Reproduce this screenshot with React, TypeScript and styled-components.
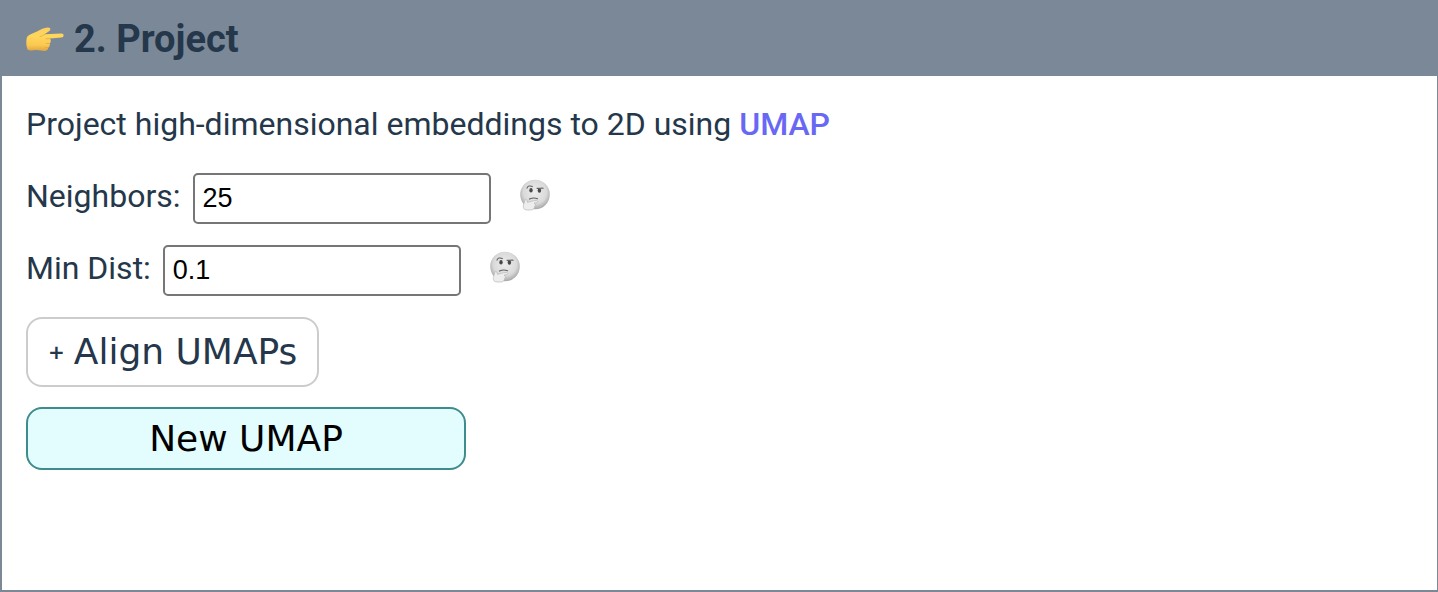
import React, { useState } from "react";
import styled, { createGlobalStyle } from "styled-components";

const GlobalStyle = createGlobalStyle`
  *, *::before, *::after { box-sizing: border-box; }
  body {
    margin: 0;
    background: #fff;
    color: #25374a;
    font-family: Roboto, "Liberation Sans", sans-serif;
    font-size: 32px;
    line-height: 48px;
  }
`;

const Panel = styled.section`
  display: flex;
  flex-direction: column;
  min-height: 100vh;
  border: 2px solid #7b8898;
  border-width: 0 1px 2px 2px;
`;

const PanelHeader = styled.header`
  display: flex;
  align-items: center;
  gap: 9px;
  padding: 15px 24px 13px;
  background: #7b8898;
`;

const Title = styled.h3`
  margin: 0;
  font-size: 38px;
  line-height: 48px;
  font-weight: 700;
`;

const PanelBody = styled.form`
  display: flex;
  flex-direction: column;
  align-items: flex-start;
  padding: 24px;
`;

const Intro = styled.p`
  margin: 0 0 25px;
`;

const DocLink = styled.a`
  color: #6868f4;
  font-weight: 500;
  text-decoration: none;
`;

const Field = styled.div`
  display: flex;
  align-items: center;
  margin-bottom: 21px;
`;

const Label = styled.label`
  margin-right: 12px;
  padding-bottom: 4px;
  line-height: 47px;
`;

const TextInput = styled.input`
  width: 298px;
  height: 51px;
  padding: 0 8px;
  border: 2px solid #767676;
  border-radius: 5px;
  background: #fff;
  color: #000;
  font-family: "Liberation Sans", Arial, sans-serif;
  font-size: 27px;
`;

const HelpButton = styled.button`
  display: flex;
  margin: 0 0 8px 28px;
  padding: 0;
  border: 0;
  background: none;
  cursor: help;
`;

const Button = styled.button<{ $primary?: boolean }>`
  display: flex;
  align-items: center;
  justify-content: center;
  gap: 9px;
  width: ${(p) => (p.$primary ? "440px" : "auto")};
  max-width: 100%;
  height: ${(p) => (p.$primary ? "63px" : "70px")};
  margin-bottom: 20px;
  padding: 0 20px;
  border: 2px solid ${(p) => (p.$primary ? "#3f8c8c" : "#ccc")};
  border-radius: 16px;
  background: ${(p) => (p.$primary ? "#e3fdff" : "#fff")};
  color: ${(p) => (p.$primary ? "#000" : "#25374a")};
  font-family: "DejaVu Sans", sans-serif;
  font-size: 36px;
  line-height: 40px;
  white-space: nowrap;
  cursor: pointer;
`;

const Plus = styled.span`
  font-size: 20px;
  font-weight: 700;
`;

const PointingHand = () => (
  <svg width="39" height="48" viewBox="0 0 39 48" aria-hidden="true">
    <defs>
      <linearGradient id="hand" gradientUnits="userSpaceOnUse" x1="0" y1="13" x2="0" y2="36">
        <stop offset="0" stopColor="#f9d060" />
        <stop offset=".35" stopColor="#ffd75c" />
        <stop offset=".75" stopColor="#fac850" />
        <stop offset="1" stopColor="#e0a440" />
      </linearGradient>
    </defs>
    <path
      d="M1 22C3 19.500 7 18.500 11 16.500C15 14.300 18 13 21.500 12.500C24.500 12.200 25.200 14.300 23.400 15.900L18.500 19.200L35.500 18.600C38.300 18.600 38.300 22.300 35.500 22.500L24 23.600C25.200 25.400 25 27.200 23.800 28.600C24 30.500 23.400 32.100 22.200 32.700C21.800 35 20.500 35.900 18.500 36L11 35.100C8 34.900 5 36 2 35C-.2 32 .1 25 1 22Z"
      fill="url(#hand)"
    />
    <path
      d="M14 21.500C16 21.200 17.500 20.200 19 19.200M24 23.600L20 23.800M23.800 28.600L20.500 28.400M22.200 32.700L19.500 32.300"
      fill="none"
      stroke="#e0a53c"
      strokeWidth=".7"
      strokeLinecap="round"
    />
  </svg>
);

const ThinkingFace = ({ id }: { id: string }) => (
  <svg width="32" height="32" viewBox="0 0 32 32" aria-hidden="true">
    <defs>
      <radialGradient id={id} cx=".5" cy=".42" r=".6">
        <stop offset="0" stopColor="#ececec" />
        <stop offset=".65" stopColor="#dadada" />
        <stop offset="1" stopColor="#a0a0a0" />
      </radialGradient>
    </defs>
    <circle cx="16" cy="15.500" r="14.800" fill={`url(#${id})`} />
    <ellipse cx="12" cy="11.200" rx="1.700" ry="2.200" fill="#484848" />
    <ellipse cx="20.400" cy="11.500" rx="1.700" ry="2.200" fill="#484848" />
    <path
      d="M8 9.200C8.500 7 11 6.300 13.300 7.600M18 9.200C20 9.800 22 8.700 24.200 9.200M10.500 20.100C13.500 18.600 16.500 18.900 18.500 19.800"
      fill="none"
      stroke="#606060"
      strokeWidth="1.100"
      strokeLinecap="round"
    />
    <path
      d="M5.800 21.300C7 19.800 8.400 21 8.300 23.300C11 23 13 21.700 17 21.500C19.200 21.500 19.200 23.500 17.200 23.700L15 24.200C17 25.200 16.800 26.700 15.700 27.200C15.800 29.600 14 31 11.500 31L8 31C5 31 3.900 29 4.400 26.500Z"
      fill="#ededed"
      stroke="#b0b0b0"
      strokeWidth=".6"
    />
  </svg>
);

type NumberFieldProps = {
  id: string;
  label: string;
  initial: string;
  help: string;
};

const NumberField = ({ id, label, initial, help }: NumberFieldProps) => {
  const [value, setValue] = useState(initial);
  return (
    <Field>
      <Label htmlFor={id}>{label}</Label>
      <TextInput id={id} value={value} onChange={(e) => setValue(e.target.value)} />
      <HelpButton type="button" aria-label={help}>
        <ThinkingFace id={`${id}-face`} />
      </HelpButton>
    </Field>
  );
};

export default function App() {
  return (
    <>
      <GlobalStyle />
      <Panel>
        <PanelHeader>
          <PointingHand />
          <Title>2. Project</Title>
        </PanelHeader>
        <PanelBody onSubmit={(e) => e.preventDefault()}>
          <Intro>
            Project high-dimensional embeddings to 2D using <DocLink href="#umap">UMAP</DocLink>
          </Intro>
          <NumberField id="neighbors" label="Neighbors:" initial="25" help="About neighbors" />
          <NumberField id="min-dist" label="Min Dist:" initial="0.1" help="About minimum distance" />
          <Button type="button">
            <Plus>+</Plus> Align UMAPs
          </Button>
          <Button type="submit" $primary>
            New UMAP
          </Button>
        </PanelBody>
      </Panel>
    </>
  );
}
